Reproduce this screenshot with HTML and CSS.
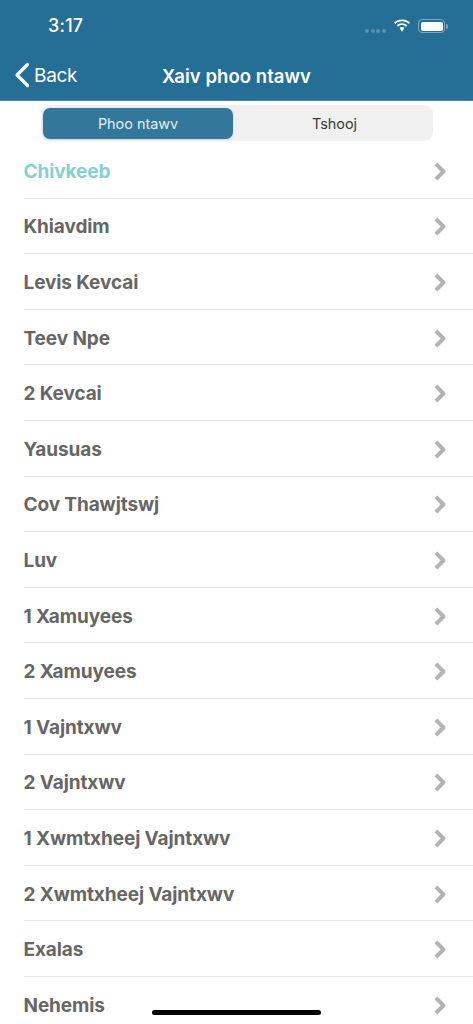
FILE: index.html
```html
<!DOCTYPE html>
<html lang="hmn">
<head>
<meta charset="utf-8">
<title>Xaiv phoo ntawv</title>
<link rel="stylesheet" href="styles.css">
</head>
<body>
<div class="screen">
  <header class="header">
    <div class="status">
      <span class="time">3:17</span>
      <div class="status-icons">
        <span class="dots"><i></i><i></i><i></i><i></i></span>
        <svg class="wifi" width="18" height="14" viewBox="0 0 18 14"><path d="M9 2.2c2.6 0 5 1 6.8 2.7l1.2-1.3C14.900 1.600 12.100.4 9 .4S3.100 1.600 1 3.600l1.200 1.300C4 3.200 6.400 2.200 9 2.200z" fill="#fff"/><path d="M9 6.100c1.500 0 2.900.6 4 1.600l1.300-1.300C12.900 5 11 4.200 9 4.200S5.100 5 3.700 6.400L5 7.700c1.100-1 2.500-1.600 4-1.600z" fill="#fff"/><path d="M9 8.100c-1 0-1.800.4-2.400 1L9 12.800l2.400-3.700c-.6-.6-1.400-1-2.400-1z" fill="#fff"/></svg>
        <span class="battery"><span class="battery-fill"></span></span>
        <span class="battery-cap"></span>
      </div>
    </div>
    <div class="nav">
      <div class="back">
        <svg width="16" height="26" viewBox="0 0 16 26"><path d="M13.500 2.500 3 13l10.500 10.500" fill="none" stroke="#fff" stroke-width="3.200" stroke-linecap="round" stroke-linejoin="round"/></svg>
        <span class="back-label">Back</span>
      </div>
      <div class="title">Xaiv phoo ntawv</div>
    </div>
  </header>
  <div class="segment-wrap">
    <div class="segment">
      <div class="seg seg-active">Phoo ntawv</div>
      <div class="seg seg-rest">Tshooj</div>
    </div>
  </div>
  <ul class="list">
    <li class="row row-current"><span>Chivkeeb</span><svg class="chev" width="14" height="21" viewBox="0 0 12 18"><path d="M2.500 2.500 9 9l-6.500 6.500" fill="none" stroke="#b3b3b3" stroke-width="3.400" stroke-linejoin="round"/></svg></li>
    <li class="row"><span>Khiavdim</span><svg class="chev" width="14" height="21" viewBox="0 0 12 18"><path d="M2.500 2.500 9 9l-6.500 6.500" fill="none" stroke="#b3b3b3" stroke-width="3.400" stroke-linejoin="round"/></svg></li>
    <li class="row"><span>Levis Kevcai</span><svg class="chev" width="14" height="21" viewBox="0 0 12 18"><path d="M2.500 2.500 9 9l-6.500 6.500" fill="none" stroke="#b3b3b3" stroke-width="3.400" stroke-linejoin="round"/></svg></li>
    <li class="row"><span>Teev Npe</span><svg class="chev" width="14" height="21" viewBox="0 0 12 18"><path d="M2.500 2.500 9 9l-6.500 6.500" fill="none" stroke="#b3b3b3" stroke-width="3.400" stroke-linejoin="round"/></svg></li>
    <li class="row"><span>2 Kevcai</span><svg class="chev" width="14" height="21" viewBox="0 0 12 18"><path d="M2.500 2.500 9 9l-6.500 6.500" fill="none" stroke="#b3b3b3" stroke-width="3.400" stroke-linejoin="round"/></svg></li>
    <li class="row"><span>Yausuas</span><svg class="chev" width="14" height="21" viewBox="0 0 12 18"><path d="M2.500 2.500 9 9l-6.500 6.500" fill="none" stroke="#b3b3b3" stroke-width="3.400" stroke-linejoin="round"/></svg></li>
    <li class="row"><span>Cov Thawjtswj</span><svg class="chev" width="14" height="21" viewBox="0 0 12 18"><path d="M2.500 2.500 9 9l-6.500 6.500" fill="none" stroke="#b3b3b3" stroke-width="3.400" stroke-linejoin="round"/></svg></li>
    <li class="row"><span>Luv</span><svg class="chev" width="14" height="21" viewBox="0 0 12 18"><path d="M2.500 2.500 9 9l-6.500 6.500" fill="none" stroke="#b3b3b3" stroke-width="3.400" stroke-linejoin="round"/></svg></li>
    <li class="row"><span>1 Xamuyees</span><svg class="chev" width="14" height="21" viewBox="0 0 12 18"><path d="M2.500 2.500 9 9l-6.500 6.500" fill="none" stroke="#b3b3b3" stroke-width="3.400" stroke-linejoin="round"/></svg></li>
    <li class="row"><span>2 Xamuyees</span><svg class="chev" width="14" height="21" viewBox="0 0 12 18"><path d="M2.500 2.500 9 9l-6.500 6.500" fill="none" stroke="#b3b3b3" stroke-width="3.400" stroke-linejoin="round"/></svg></li>
    <li class="row"><span>1 Vajntxwv</span><svg class="chev" width="14" height="21" viewBox="0 0 12 18"><path d="M2.500 2.500 9 9l-6.500 6.500" fill="none" stroke="#b3b3b3" stroke-width="3.400" stroke-linejoin="round"/></svg></li>
    <li class="row"><span>2 Vajntxwv</span><svg class="chev" width="14" height="21" viewBox="0 0 12 18"><path d="M2.500 2.500 9 9l-6.500 6.500" fill="none" stroke="#b3b3b3" stroke-width="3.400" stroke-linejoin="round"/></svg></li>
    <li class="row"><span>1 Xwmtxheej Vajntxwv</span><svg class="chev" width="14" height="21" viewBox="0 0 12 18"><path d="M2.500 2.500 9 9l-6.500 6.500" fill="none" stroke="#b3b3b3" stroke-width="3.400" stroke-linejoin="round"/></svg></li>
    <li class="row"><span>2 Xwmtxheej Vajntxwv</span><svg class="chev" width="14" height="21" viewBox="0 0 12 18"><path d="M2.500 2.500 9 9l-6.500 6.500" fill="none" stroke="#b3b3b3" stroke-width="3.400" stroke-linejoin="round"/></svg></li>
    <li class="row"><span>Exalas</span><svg class="chev" width="14" height="21" viewBox="0 0 12 18"><path d="M2.500 2.500 9 9l-6.500 6.500" fill="none" stroke="#b3b3b3" stroke-width="3.400" stroke-linejoin="round"/></svg></li>
    <li class="row"><span>Nehemis</span><svg class="chev" width="14" height="21" viewBox="0 0 12 18"><path d="M2.500 2.500 9 9l-6.500 6.500" fill="none" stroke="#b3b3b3" stroke-width="3.400" stroke-linejoin="round"/></svg></li>
  </ul>
  <div class="home-indicator"></div>
</div>
</body>
</html>
```
FILE: styles.css
```css
* { box-sizing: border-box; }
html, body { margin: 0; padding: 0; background: #fff; }
body { font-family: Inter, "Liberation Sans", sans-serif; }
.screen { position: relative; width: 473px; height: 1024px; overflow: hidden; background: #fff; }

.header { background: #256f96; height: 101px; color: #fff; display: flex; flex-direction: column; border-bottom: 1px solid #4c89a8; }
.status { height: 51px; display: flex; align-items: center; justify-content: space-between; padding: 0 25px 0 48px; }
.time { font-size: 18px; font-weight: 500; letter-spacing: 0.2px; }
.status-icons { display: flex; align-items: center; padding-top: 1px; }
.dots { display: flex; gap: 1.660px; margin: 9px 7px 0 0; }
.dots i { display: block; width: 4px; height: 4px; border-radius: 50%; background: #5c92ae; }
.wifi { margin-right: 7px; }
.battery { display: block; width: 27px; height: 14px; border: 1px solid #7fa9c0; border-radius: 4px; padding: 1.500px; }
.battery-fill { display: block; height: 100%; background: #fff; border-radius: 2px; }
.battery-cap { display: block; width: 2px; height: 5px; margin-left: 1px; background: #7fa9c0; border-radius: 0 2px 2px 0; }

.nav { position: relative; height: 49px; display: flex; align-items: center; justify-content: center; }
.back { position: absolute; left: 14px; top: 11px; display: flex; align-items: center; gap: 4px; font-size: 19px; letter-spacing: -0.3px; }
.back-label { padding-top: 1px; }
.title { font-size: 18.500px; font-weight: 600; letter-spacing: 0.05px; }

.segment-wrap { padding: 4px 40px 0 41px; height: 42px; }
.segment { display: flex; height: 36px; padding: 2.500px 2px; background: #f0f0f0; border-radius: 9px; }
.seg { flex: 1; display: flex; align-items: center; justify-content: center; font-size: 14.400px; color: #3a3a3a; border-radius: 7px; }
.seg-rest { padding-left: 5px; }
.seg-active { flex: 0 0 190px; background: #33779b; color: #e6eef3; box-shadow: 0 1px 3px rgba(0, 0, 0, .12); }

.list { list-style: none; margin: 0; padding: 0 0 0 23.500px; }
.row { height: 55.600px; display: flex; align-items: center; justify-content: space-between; padding: 2px 26px 0 0; border-bottom: 1px solid #e8e8e8; font-size: 19px; font-weight: 700; letter-spacing: -0.1px; color: #666; }
.row-current { color: #86d0d3; }
.chev { display: block; }

.home-indicator { position: absolute; left: 152px; bottom: 9px; width: 169px; height: 5px; border-radius: 3px; background: #000; }
```
